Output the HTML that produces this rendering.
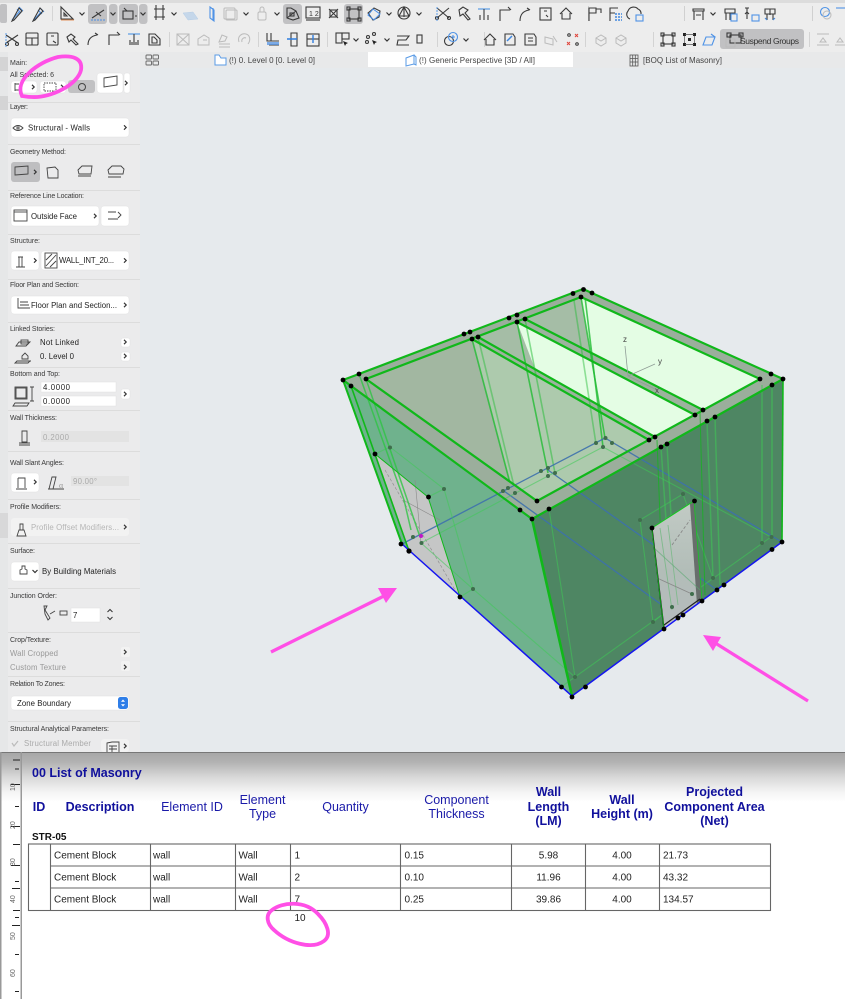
<!DOCTYPE html>
<html><head><meta charset="utf-8"><style>
html,body{margin:0;padding:0;background:#fff}
svg{display:block;font-family:"Liberation Sans",sans-serif;filter:blur(.35px)}
.l{font-size:7px;fill:#3a3a3a}
.v{font-size:7.8px;fill:#222}
.d{font-size:7.8px;fill:#aaa}
.t{font-size:8px;fill:#444}
.b{fill:#fff;stroke:#e0e0e0;stroke-width:.5}
.s{stroke:#dcdcdc;stroke-width:1}
.i path,.i rect,.i circle{fill:none;stroke:#3a3a3a;stroke-width:1.100}
.u path,.u rect,.u circle{fill:none;stroke:#4f93e6;stroke-width:1.100}
.g path,.g rect,.g circle{fill:none;stroke:#bbb;stroke-width:1}
.p path,.p rect{fill:none;stroke:#444;stroke-width:.9}
.h{font-size:12.5px;fill:#1a1aa8;text-anchor:middle}
.hb{font-size:12.5px;fill:#10109c;font-weight:bold;text-anchor:middle}
.c{font-size:10px;fill:#222}
.m{text-anchor:middle}
.rn{font-size:7px;fill:#666}
</style></head><body>
<svg width="845" height="999" viewBox="0 0 845 999" xmlns="http://www.w3.org/2000/svg">
<defs>
<path id="c" d="M-2.5-1 0 1.5 2.5-1" fill="none" stroke="#333" stroke-width="1.2"/>
<path id="r" d="M-1-2.2 1.2 0-1 2.2" fill="none" stroke="#333" stroke-width="1.2"/>
<linearGradient id="sh" x1="0" y1="0" x2="0" y2="1"><stop offset="0" stop-color="#a6a6a6"/><stop offset=".2" stop-color="#b2b2b2"/><stop offset=".5" stop-color="#d8d8d8"/><stop offset=".8" stop-color="#f4f4f4"/><stop offset="1" stop-color="#fff"/></linearGradient>
<linearGradient id="dg" x1="0" y1="0" x2="0" y2="1"><stop offset="0" stop-color="#c2cbc5"/><stop offset=".55" stop-color="#b2bdb8"/><stop offset="1" stop-color="#b6bbbd"/></linearGradient>
</defs>

<!-- page base -->
<rect width="845" height="752" fill="#e6eaed"/>
<rect width="845" height="52" fill="#ededed"/>
<rect width="845" height="3" fill="#dcdcdc"/>
<rect y="52" width="845" height="16" fill="#e8e9ea"/>
<rect x="368" y="52" width="205" height="15" fill="#fff"/>

<!-- toolbar row buttons -->
<g fill="#c1c1c3">
<rect x="0" y="4" width="7" height="19" rx="2"/>
<rect x="88" y="4" width="19" height="20" rx="3"/><rect x="109" y="4" width="8.500" height="20" rx="3"/>
<rect x="119" y="4" width="19" height="20" rx="3"/><rect x="139" y="4" width="8.500" height="20" rx="3"/>
<rect x="283" y="4" width="19" height="20" rx="3"/><rect x="344" y="4" width="19" height="20" rx="3"/>
<rect x="720" y="29" width="84" height="20" rx="3"/>
</g>

<!-- toolbar row 1 -->
<g class="u"><path d="M12 20 20 11M19 7l4 4M17 9l4 4"/><path d="M33 21 41 12M40 8l4 4M38 10l4 4"/></g>
<g class="i"><path d="M19 8l3 3-8 9-2 1 1-2zM40 8l3 3-8 9-2 1 1-2z"/></g>
<path d="M52.500 6v15" stroke="#d5d5d5"/>
<g class="i"><path d="M61 7v12h12zM64 13v3h3z"/></g><path d="M61 20h13" stroke="#e2915a" fill="none"/>
<g class="i"><path d="M92 18l12-8M96 12l5 4"/></g><path d="M91 20h14" stroke="#4a8ee6" stroke-dasharray="2 1" fill="none"/>
<g class="i"><rect x="123" y="11" width="10" height="8"/><path d="M124 8l3 3M135 16h2"/></g>
<g class="i"><path d="M154 9h11M154 17h11M156 5v15M163 5v15" stroke-width="1.400"/></g>
<g class="u"><path d="M210 7l4 3v11l-4-3z"/><path d="M213 8v12"/></g>
<path d="M183 13l10-1 5 7-10 1z" fill="#c5d7ea" stroke="#b5cde6" stroke-width=".5"/>
<g class="g"><rect x="224" y="8" width="11" height="11" rx="1"/><rect x="226" y="10" width="11" height="10" rx="1"/></g>
<g class="g"><rect x="258" y="12" width="8" height="8" rx="1.500"/><path d="M260 12V9a2 2 0 0 1 4 0v3"/></g>
<g class="i"><path d="M287 8h4l5 3 3 7-6 2-6-2zM287 18l9-7"/><rect x="290" y="13" width="4" height="3"/></g>
<g class="i"><rect x="306" y="7" width="14" height="11"/><path d="M306 20h14"/></g><text x="309" y="16" font-size="7" fill="#333">1 2</text>
<g class="i"><path d="M329 9l9 9M338 9l-9 9"/><rect x="330" y="10" width="7" height="7"/></g>
<g class="i"><rect x="349" y="9" width="10" height="10"/><rect x="347" y="7" width="3" height="3"/><rect x="358" y="7" width="3" height="3"/><rect x="347" y="18" width="3" height="3"/><rect x="358" y="18" width="3" height="3"/></g>
<g class="i"><path d="M368 13l6-5 6 3-1 6-6 3z"/></g><path d="M373 9l7 5-6 6-6-5z" fill="none" stroke="#4a8ee6"/>
<g class="i"><circle cx="404" cy="13" r="6"/><path d="M404 7l-5 9h10zM404 7v10"/></g>
<g class="i"><path d="M437 8l12 10M449 8l-12 10"/><circle cx="437" cy="18" r="1.500"/><circle cx="449" cy="18" r="1.500"/></g><path d="M437 7v14" stroke="#5a9be6" stroke-dasharray="2 1"/>
<g class="i"><path d="M459 10l4-3 5 3-3 3 5 6-2 1-5-6-3 2z"/></g>
<path d="M478 9h12" stroke="#5a9be6" stroke-width="1.200"/><g class="i"><path d="M484 9v11M480 20v-5M488 20v-5"/></g>
<g class="i"><path d="M500 21V10h10M508 7l3 3"/></g><g class="i"><path d="M520 21c0-6 3-10 9-11M527 8l3 2"/></g>
<g class="i"><rect x="540" y="8" width="11" height="12"/><path d="M544 11h3M546 15l2 2"/></g>
<g class="i"><path d="M560 14l6-6 6 6M562 13v6h8v-6" stroke-width="1.400"/></g>
<path d="M588.500 6v15M684.500 6v15M812.500 6v15" stroke="#d0d0d0"/>
<g class="i"><path d="M589 21V8h7v5h-7M596 9h5v4"/></g>
<g class="i"><path d="M610 21V8h8M610 13h5"/></g><path d="M615 14h7M615 17h7M615 20h7" stroke="#3f87e0" stroke-width="1.500" stroke-dasharray="2 1"/>
<g class="i"><path d="M630 19a5 5 0 0 1-2-8 6 6 0 0 1 10-2 5 5 0 0 1 3 5"/></g><g class="u"><rect x="636" y="15" width="7" height="6"/></g>
<g class="i"><path d="M693 9h11v2h-11zM694 11v9M703 11v9M696 15h5"/></g>
<g class="i"><path d="M725 9h10v4h-10zM726 13v7M730 13v7"/></g><g class="u"><rect x="731" y="14" width="6" height="7"/></g>
<g class="i"><path d="M745 8h4M747 8v11M745 14l2-2 2 2"/></g><g class="u"><rect x="752" y="15" width="7" height="6"/></g>
<g class="i"><path d="M765 9h10v5h-10zM767 14v6M773 14v6M770 9v6"/></g><path d="M767 20l-2-2M773 20l2-2" stroke="#3f87e0"/>
<g class="u"><circle cx="825" cy="12" r="4.500"/><path d="M836 8h9"/></g><g class="g"><circle cx="827" cy="15" r="4"/></g>
<use href="#c" x="82" y="13.500"/><use href="#c" x="113" y="13.500"/><use href="#c" x="143" y="13.500"/><use href="#c" x="174" y="13.500"/><use href="#c" x="246" y="13.500"/><use href="#c" x="277" y="13.500"/><use href="#c" x="389" y="13.500"/><use href="#c" x="419" y="13.500"/><use href="#c" x="713" y="13.500"/>

<!-- toolbar row 2 -->
<g class="i"><path d="M6 35l12 8M18 35 6 43"/><circle cx="7" cy="44" r="1.500"/><circle cx="17" cy="44" r="1.500"/></g>
<path d="M6 33v14" stroke="#5a9be6" stroke-dasharray="2 1"/>
<g class="i"><rect x="26" y="33" width="12" height="12" rx="1"/><path d="M26 38h12M32 38v7"/></g>
<g class="i"><rect x="47" y="33" width="11" height="12" rx="1"/><path d="M51 36h3M53 41l3 2"/></g>
<g class="i"><path d="M67 37l4-3 4 3-2 2 5 5-2 1-5-5-2 2z"/></g>
<g class="i"><path d="M88 45c0-6 3-9 9-10M95 33l3 2"/></g>
<g class="i"><path d="M109 45V35h10M117 32l3 3"/></g>
<path d="M128 34h12" stroke="#5a9be6" stroke-width="1.200"/><g class="i"><path d="M134 34v11M130 45v-5M138 45v-5M132 45v-3M136 45v-3"/></g>
<g class="i"><path d="M149 34h6l5 5v6h-11zM152 37h2l3 3v3h-5z"/></g>
<path d="M169.500 32v15M258.500 32v15M327.500 32v15M437.500 32v15M484.500 32v15M585.500 32v15M653.500 32v15M809.500 32v15" stroke="#d3d3d3"/>
<g class="g"><rect x="177" y="34" width="12" height="11"/><path d="M177 34l12 11M189 34l-12 11"/></g>
<g class="g"><path d="M198 45v-6l6-4 5 3v7zM203 40h4"/></g>
<g class="g"><path d="M219 42l3-7 5 2-2 4zM219 44h11M219 47h11"/></g>
<g class="g"><path d="M239 42c-2-6 3-9 7-8 4 1 5 6 2 10M242 42c-1-3 2-5 4-4"/></g>
<g class="i"><path d="M267 33v8h12M271 33v8M269 45h10"/></g><path d="M267 42h12v3h-12z" fill="#4a8ee6" opacity=".7"/>
<g class="i"><path d="M291 33h6v13h-6z"/></g><path d="M287 39h8M297 39h-3" stroke="#2f7ee0" stroke-width="1.500"/>
<g class="i"><rect x="307" y="34" width="12" height="12"/><path d="M307 39h12"/></g><path d="M313 35v8" stroke="#2f7ee0" stroke-width="1.400"/>
<g class="i"><rect x="336" y="33" width="6" height="10"/><rect x="342" y="33" width="7" height="6"/></g><path d="M343 41l2 5 1-2 2-1z" fill="#222"/>
<g class="i"><circle cx="368" cy="37" r="1.500"/><circle cx="374" cy="34" r="1.500"/><circle cx="367" cy="42" r="1.500"/></g><path d="M372 40l2 5 1-2 2-1z" fill="#222"/>
<g class="i"><path d="M397 36h12l-3 4h-8l-1 5h12"/></g>
<g class="i"><rect x="417" y="35" width="5" height="8"/></g>
<g class="i"><circle cx="449" cy="41" r="4.500"/></g><g class="u"><circle cx="453" cy="37" r="4.500"/><path d="M451 37h4M453 35v4"/></g>
<g class="i"><path d="M484 40l6-6 6 6M486 39v6h8v-6" stroke-width="1.400"/></g>
<g class="i"><path d="M505 34h8l2 3v8h-10z"/></g><path d="M507 41l5-5" stroke="#3f87e0" stroke-width="1.500"/>
<g class="i"><path d="M525 34h9l2 3v8h-11zM528 38h5M528 41h5"/></g>
<g class="g"><path d="M545 37l8 2v6l-8-2z"/><path d="M553 36l4 6"/></g>
<g fill="none" stroke="#333"><circle cx="569" cy="35" r="1.300"/><circle cx="577" cy="44" r="1.300"/></g>
<g fill="none" stroke="#e0443a"><path d="M567 42l3 3M570 42l-3 3M575 34l3 3M578 34l-3 3"/></g>
<g class="g"><path d="M596 38l5-3 5 3v5l-5 3-5-3zM596 38l5 3 5-3" stroke="#bcd0e4"/><path d="M616 38l5-3 5 3v5l-5 3-5-3zM616 38l5 3 5-3" stroke="#bcd0e4"/></g>
<g class="i"><rect x="663" y="35" width="10" height="9"/><rect x="661" y="33" width="3" height="3"/><rect x="672" y="33" width="3" height="3"/><rect x="661" y="43" width="3" height="3"/><rect x="672" y="43" width="3" height="3"/></g>
<g fill="#222"><rect x="683" y="33" width="3" height="3"/><rect x="693" y="33" width="3" height="3"/><rect x="683" y="43" width="3" height="3"/><rect x="693" y="43" width="3" height="3"/><rect x="688" y="38" width="3" height="3"/></g><path d="M685 34.500h9M685 44.500h9M684.500 36v7M694.500 36v7" stroke="#555" fill="none" stroke-width=".7"/>
<g class="u"><path d="M703 45l3-8h9l-3 8zM711 34l4 3" stroke-width="1.300"/></g>
<g class="i"><rect x="730" y="35" width="11" height="8"/><rect x="727" y="33" width="4" height="4"/><rect x="739" y="33" width="4" height="4"/></g>
<g class="g"><rect x="726" y="39" width="9" height="8" stroke="#999"/></g>
<text x="740" y="44" font-size="8.500" fill="#333" textLength="59">Suspend Groups</text>
<g class="g"><path d="M817 34h12M820 42l3-4 3 4zM817 45h12"/><path d="M837 42l3-4 3 4zM835 45h10"/></g>
<use href="#c" x="356" y="39.500"/><use href="#c" x="387" y="39.500"/><use href="#c" x="466" y="39.500"/>

<!-- tab row -->
<g fill="none" stroke="#666" stroke-width=".9"><rect x="146" y="55" width="5.500" height="4" rx=".8"/><rect x="153" y="55" width="5.500" height="4" rx=".8"/><rect x="146" y="61" width="5.500" height="4" rx=".8"/><rect x="153" y="61" width="5.500" height="4" rx=".8"/></g>
<path d="M215 65V55h4l2 3h5v7z" fill="#fff" stroke="#5a9be6"/>
<text x="229" y="63" class="t" textLength="86">(!) 0. Level 0 [0. Level 0]</text>
<path d="M406 58l8-3v9l-8 2zM414 55l2 2v8l-2-1" fill="#fff" stroke="#5a9be6"/>
<text x="419" y="63" class="t" textLength="116">(!) Generic Perspective [3D / All]</text>
<g fill="none" stroke="#555" stroke-width=".8"><rect x="630" y="55" width="8" height="11"/><path d="M630 58.500h8M630 62h8M632.700 55v11M635.300 55v11"/></g>
<text x="643" y="63" class="t" textLength="79">[BOQ List of Masonry]</text>

<!-- left panel -->
<rect x="0" y="52" width="8" height="700" fill="#e6e7e8"/>
<rect x="8" y="52" width="132" height="700" fill="#ebebec"/>
<rect x="0" y="57" width="8" height="14" fill="#d4d4d5"/><rect x="0" y="96" width="8" height="14" fill="#d4d4d5"/><rect x="0" y="513" width="8" height="25" fill="#d8d8d9"/>
<path d="M8 102.500h132M8 144.500h132M8 190.500h132M8 234.500h132M8 279.500h132M8 322.500h132M8 367.500h132M8 410.500h132M8 451.500h132M8 499.500h132M8 543.500h132M8 588.500h132M8 632.500h132M8 676.500h132M8 721.500h132" class="s"/>

<g class="l">
<text x="10" y="65">Main:</text><text x="10" y="77" textLength="44">All Selected: 6</text>
<text x="10" y="109" textLength="18">Layer:</text>
<text x="10" y="154" textLength="56">Geometry Method:</text>
<text x="10" y="198" textLength="74">Reference Line Location:</text>
<text x="10" y="243" textLength="30">Structure:</text>
<text x="10" y="287" textLength="69">Floor Plan and Section:</text>
<text x="10" y="331" textLength="45">Linked Stories:</text>
<text x="10" y="376" textLength="50">Bottom and Top:</text>
<text x="10" y="420" textLength="47">Wall Thickness:</text>
<text x="10" y="465" textLength="54">Wall Slant Angles:</text>
<text x="10" y="509" textLength="51">Profile Modifiers:</text>
<text x="10" y="553" textLength="25">Surface:</text>
<text x="10" y="598" textLength="47">Junction Order:</text>
<text x="10" y="642" textLength="41">Crop/Texture:</text>
<text x="10" y="686" textLength="55">Relation To Zones:</text>
<text x="10" y="731" textLength="99">Structural Analytical Parameters:</text>
</g>

<!-- panel buttons -->
<g class="b">
<rect x="11" y="81" width="26" height="12" rx="3"/><rect x="40" y="81" width="26" height="12" rx="3"/>
<rect x="97" y="73" width="26" height="20" rx="3"/><rect x="124" y="73" width="6" height="20" rx="2"/>
<rect x="11" y="118" width="118" height="19" rx="3"/>
<rect x="11" y="206" width="88" height="20" rx="3"/><rect x="101" y="206" width="28" height="20" rx="3"/>
<rect x="11" y="251" width="28" height="19" rx="3"/><rect x="41" y="251" width="88" height="19" rx="3"/>
<rect x="11" y="296" width="118" height="18" rx="3"/>
<rect x="121" y="338" width="9" height="9" rx="2"/><rect x="121" y="352" width="9" height="9" rx="2"/>
<rect x="41" y="382" width="75" height="10"/><rect x="41" y="396" width="75" height="10"/>
<rect x="121" y="389" width="9" height="10" rx="2"/>
<rect x="11" y="473" width="28" height="19" rx="3"/>
<rect x="11" y="562" width="28" height="19" rx="3"/>
<rect x="71" y="608" width="29" height="14"/>
<rect x="11" y="696" width="118" height="14" rx="3"/>
</g>
<rect x="68" y="80" width="27" height="13" rx="3" fill="#c1c1c3"/>
<rect x="11" y="162" width="29" height="20" rx="3" fill="#bebec0"/>
<g fill="#f2f2f2"><rect x="11" y="518" width="118" height="18" rx="3"/><rect x="121" y="647" width="9" height="10" rx="2"/><rect x="121" y="661" width="9" height="10" rx="2"/><rect x="101" y="739" width="28" height="13" rx="3"/></g>
<g fill="#e3e3e3"><rect x="41" y="431" width="88" height="11"/><rect x="71" y="476" width="58" height="10"/></g>
<rect x="118" y="697" width="10" height="12" rx="2.500" fill="#2f7ee8"/>
<path d="M123 699.500l-2 2.200h4zM123 706.500l-2-2.200h4z" fill="#fff"/>

<g class="p">
<path d="M15 83v8M15 84h4M15 90h4"/><rect x="44" y="83" width="12" height="8" stroke-dasharray="1.500 1"/>
<circle cx="82" cy="87" r="3.500" fill="none" stroke="#444"/>
<path d="M104 78l13-2v9l-13 2z"/>
<path d="M13 128q5-5 10 0q-5 5-10 0z"/><rect x="17" y="127" width="2" height="2"/>
<path d="M15 167l13-1v8l-13 1zM15 175l13-1" stroke="#333"/>
<path d="M47 168l8-1 3 3v8h-10z" stroke="#aaa"/>
<path d="M78 170l4-4h10l-1 8h-12zM78 176h13" stroke="#444"/>
<path d="M108 170l4-4h9l3 3-1 5h-14zM108 177h13" stroke="#666"/>
<rect x="14" y="210" width="13" height="11"/><path d="M14 212h13"/>
<path d="M108 212h8M108 219h10M118 212l3 3-3 3"/>
<path d="M18 257h5M19 257v10M22 257v10M16 267h9"/>
<rect x="45" y="253" width="12" height="15" fill="#9fd4ea"/><path d="M46 266l10-11M46 260l6-6M50 267l6-6"/>
<path d="M18 298v10h12M20 302h8M20 305h9"/>
<path d="M19 342h11l-4 4h-10z" fill="#999"/><rect x="21" y="340" width="7" height="4"/>
<path d="M22 356l3-3 3 3v3h-6zM17 361h14"/><path d="M17 361h13l-2 2h-13z" fill="#999"/>
<rect x="15" y="387" width="12" height="12"/><rect x="16" y="388" width="10" height="10"/><path d="M32 387v14M30 387h4M30 401h4"/><path d="M15 403h14l-2 3h-14z" fill="#888"/>
<g stroke="#999"><path d="M22 431h5v11h-5zM19 443h11M19 445h11"/></g>
<path d="M18 478h7v10M18 478v10M16 489h11"/>
<path d="M49 489l3-12h4l-3 12zM48 489h16" stroke="#aaa"/>
<path d="M19 530h5l2 6h-9zM20 524h3v6h-3z" stroke="#aaa"/>
<path d="M20 574h7v-4l-2-1v-3h-3v3l-2 1z"/>
<path d="M45 610l5 8-2 2-3-6-1-8h3zM50 614l5-3" stroke="#444"/><rect x="60" y="611" width="7" height="4"/>
<path d="M107 743l5-1h7v11h-12zM109 746h8M109 749h8M112 746v6" stroke="#999"/>
</g>
<text x="28" y="130.500" class="v" textLength="62">Structural - Walls</text>
<text x="31" y="219" class="v" textLength="46">Outside Face</text>
<text x="59" y="263" class="v" textLength="55">WALL_INT_20...</text>
<text x="31" y="308" class="v" textLength="86">Floor Plan and Section...</text>
<text x="40" y="345" class="v" textLength="39">Not Linked</text>
<text x="40" y="359" class="v" textLength="34">0. Level 0</text>
<text x="43" y="390" class="v" textLength="27">4.0000</text>
<text x="43" y="404" class="v" textLength="27">0.0000</text>
<text x="43" y="440" class="d" textLength="26">0.2000</text>
<text x="73" y="484" class="d" textLength="24">90.00°</text>
<text x="31" y="530" class="d" style="fill:#b5b5b5" textLength="88">Profile Offset Modifiers...</text>
<text x="42" y="574" class="v" textLength="74">By Building Materials</text>
<text x="73" y="618" class="v">7</text>
<text x="10" y="656" class="d" style="fill:#999" textLength="48">Wall Cropped</text>
<text x="10" y="670" class="d" style="fill:#999" textLength="56">Custom Texture</text>
<text x="17" y="706" class="v" textLength="54">Zone Boundary</text>
<text x="24" y="746" class="d" style="fill:#aaa" textLength="67">Structural Member</text>
<path d="M12 743l2 3 4-5" fill="none" stroke="#bbb" stroke-width="1.200"/>
<text x="59" y="488" font-size="8" fill="#999" font-family="Liberation Serif">α</text>
<g>
<use href="#r" x="33" y="87"/><use href="#r" x="62" y="87"/><use href="#r" x="126" y="83"/><use href="#r" x="125" y="127.500"/>
<use href="#r" x="35" y="172"/><use href="#r" x="95" y="216"/><use href="#r" x="35" y="260.500"/><use href="#r" x="125" y="260.500"/><use href="#r" x="125" y="305"/>
<use href="#r" x="125" y="342"/><use href="#r" x="125" y="356"/><use href="#r" x="125" y="394"/><use href="#r" x="35" y="482"/>
<use href="#r" x="125" y="527"/><use href="#r" x="125" y="652"/><use href="#r" x="125" y="667"/><use href="#r" x="125" y="746"/>
<use href="#c" x="35" y="571"/>
</g>
<path d="M107.500 612l2.500-2.500 2.500 2.500M107.500 617l2.500 2.500 2.500-2.500" fill="none" stroke="#333"/>

<!-- 3D model -->
<g>
<polygon points="366,379 581,297 760,379 537,501" fill="#adcaad"/>
<polygon points="366,379 472,339 510,482" fill="#a2b7a1"/>
<polygon points="581,297 760,379 703,410 525,319" fill="#e4fde4"/>
<polygon points="525,319 581,297 590,351" fill="#a5bda6"/>
<polygon points="517,322 695,415 655,437 478,337" fill="#e4fde4"/>
<polygon points="517,322 478,337 535,369" fill="#a5bda6"/>
<polygon points="525,319 703,410 695,415 517,322" fill="#9db29e"/>
<polygon points="478,337 655,437 649,440 472,339" fill="#9db29e"/>

<!-- interior sloped lines -->
<g fill="none" stroke="#22bb33" stroke-opacity=".8" stroke-width="1.600">
<path d="M472 339 510 483"/><path d="M478 337 515 490" stroke-opacity=".45"/>
<path d="M517 322 548 473"/><path d="M525 319 555 473" stroke-opacity=".5"/>
<path d="M581 297 605 438"/><path d="M573 294 596 444" stroke-opacity=".45"/><path d="M585 297 603 447"/>
</g>

<!-- right wall -->
<polygon points="532,519 783,379 782,542 572,696" fill="#4e8663"/>
<!-- left wall -->
<polygon points="343,380 532,519 572,696 460,596 428,497 375,454 409,551 402,544" fill="#6fb28d"/>
<polygon points="375,454 428,497 460,596 409,551" fill="#c5c6c6"/>
<g fill="none" stroke="#8a8a8a" stroke-width=".6"><path d="M385 470 455 590" stroke-dasharray="3 2"/><path d="M415 480 421 543"/><path d="M403 500 440 520"/></g>

<!-- rim -->
<path fill-rule="evenodd" d="M343 380 583 289 783 379 532 519zM366 379 581 297 760 379 537 501z" fill="#9bae9c"/>

<!-- blue base lines through -->
<g fill="none" stroke="#3d70ad" stroke-opacity=".9" stroke-width="1.300">
<path d="M402 544 605 438 782 542"/><path d="M548 470 717 590"/><path d="M504 491 680 618"/>
</g>
<!-- faint inner green -->
<g fill="none" stroke="#3ecb55" stroke-opacity=".55" stroke-width="1.100">
<path d="M421 543 603 447 771 537 575 677 473 589 421 543"/>
<path d="M390 447 444 489 473 589"/><path d="M375 454 390 447"/><path d="M428 497 444 489"/><path d="M460 597 473 589"/>
<path d="M653 622 672 607"/><path d="M640 520 683 494 713 578"/><path d="M640 520 653 622"/>
<path d="M549 509 575 677"/><path d="M561 687 575 677"/>
<path d="M661 447 672 607" stroke-width="1.500"/><path d="M667 444 676 605" stroke-width="1.500"/>
<path d="M707 421 713 578" stroke-width="1.500"/><path d="M715 417 720 585" stroke-width="1.500"/>
<path d="M762 385 762 543" stroke-width="1.500"/><path d="M772 385 772 537" stroke-width="1.500"/>
</g>
<g fill="none" stroke="#2ec444" stroke-opacity=".8" stroke-width="1.500">
<path d="M359 374 404 500 411 530"/><path d="M366 379 420 537"/>
</g>

<!-- main edges -->
<g fill="none" stroke="#10b81a" stroke-width="2.200" stroke-linejoin="round">
<path d="M343 380 583 289 783 379 532 519 343 380z"/>
<path d="M366 379 581 297 760 379 537 501 366 379z"/>
<path d="M525 319 703 410M517 322 695 415M478 337 655 437M472 339 649 440"/>
</g>
<g fill="none" stroke="#10b81a">
<path d="M343 380 402 544" stroke-width="2"/><path d="M351 386 409 551" stroke-width="1.600"/>
<path d="M532 519 572 696" stroke-width="2.600"/>
<path d="M783 379 782 542" stroke-width="1.600"/>
<path d="M375 454 428 497 460 597" stroke-width="1"/><path d="M375 454 409 551" stroke-width="1"/>
<path d="M657 440 664 620" stroke-width="1" stroke-opacity=".7"/><path d="M700 412 705 595" stroke-width="1" stroke-opacity=".7"/>
</g>

<!-- door -->
<polygon points="652,528 694,501 702,601 664,629" fill="url(#dg)"/>
<polygon points="690,504 694,501 702,601 697,605" fill="#686e6c"/>
<g fill="none" stroke-width=".9"><path d="M660 528 672 610" stroke="#7fb98c"/><path d="M668 525 678 605" stroke="#7fb98c"/><path d="M654 548 700 590" stroke="#58a870" stroke-opacity=".6"/><path d="M672 545 690 520" stroke="#888" stroke-dasharray="3 2"/><path d="M657 578 692 594" stroke="#888"/></g>
<path d="M652 528 664 629" stroke="#111" stroke-width="1.300" fill="none"/>
<path d="M664 625 700 599" stroke="#222" stroke-width="1.200" fill="none"/>
<path d="M665 627 702 601" stroke="#fff" stroke-width="1" fill="none"/>
<path d="M652 528 694 501" stroke="#12cc1c" stroke-width="1" fill="none"/>
<path d="M652 530 664 629M694 501 702 601" stroke="#12cc1c" stroke-width=".7" fill="none"/>

<!-- floor edge -->
<path d="M402 544 572 696 782 542" fill="none" stroke="#1515f0" stroke-width="1.500"/>

<!-- dim dots -->
<g fill="#3f6e4c">
<circle cx="390" cy="447.500" r="2"/><circle cx="444" cy="489" r="2"/><circle cx="421.500" cy="543" r="2"/><circle cx="473" cy="589" r="2"/><circle cx="575" cy="677" r="2"/><circle cx="653" cy="622" r="2"/><circle cx="713" cy="578" r="2"/><circle cx="762" cy="543" r="2"/><circle cx="771.500" cy="537" r="2"/><circle cx="640" cy="520" r="2"/><circle cx="683" cy="494" r="2"/><circle cx="672" cy="607" r="2"/><circle cx="692" cy="594" r="2"/><circle cx="605.500" cy="438" r="2"/><circle cx="603" cy="447" r="2"/><circle cx="596" cy="443" r="2"/><circle cx="612" cy="443" r="2"/><circle cx="503" cy="491" r="2"/><circle cx="515" cy="493" r="2"/><circle cx="508" cy="488" r="2"/><circle cx="541" cy="471" r="2"/><circle cx="555" cy="473" r="2"/><circle cx="548" cy="468" r="2"/><circle cx="548" cy="476" r="2"/><circle cx="413" cy="537" r="2"/>
</g>
<!-- black dots -->
<g fill="#000">
<circle cx="343" cy="380" r="2.400"/><circle cx="359" cy="374" r="2.400"/><circle cx="366" cy="379" r="2.400"/><circle cx="351" cy="386" r="2.400"/><circle cx="464" cy="334" r="2.400"/><circle cx="470" cy="332" r="2.400"/><circle cx="472" cy="339" r="2.400"/><circle cx="478" cy="337" r="2.400"/><circle cx="509" cy="318" r="2.400"/><circle cx="517" cy="315" r="2.400"/><circle cx="517" cy="322" r="2.400"/><circle cx="525" cy="319" r="2.400"/><circle cx="573" cy="293.500" r="2.400"/><circle cx="583.500" cy="289.500" r="2.400"/><circle cx="592" cy="293" r="2.400"/><circle cx="581" cy="297" r="2.400"/><circle cx="760" cy="379" r="2.400"/><circle cx="771" cy="374" r="2.400"/><circle cx="783" cy="379" r="2.400"/><circle cx="772" cy="385" r="2.400"/><circle cx="695" cy="415" r="2.400"/><circle cx="703" cy="410" r="2.400"/><circle cx="707" cy="421" r="2.400"/><circle cx="715" cy="417" r="2.400"/><circle cx="649" cy="440" r="2.400"/><circle cx="655" cy="437" r="2.400"/><circle cx="661" cy="447" r="2.400"/><circle cx="667" cy="444" r="2.400"/><circle cx="520" cy="510" r="2.400"/><circle cx="537" cy="501" r="2.400"/><circle cx="549" cy="509" r="2.400"/><circle cx="532" cy="519" r="2.400"/><circle cx="375" cy="454" r="2.400"/><circle cx="428.500" cy="497" r="2.400"/><circle cx="401" cy="544" r="2.400"/><circle cx="409" cy="551" r="2.600"/><circle cx="460" cy="597" r="2.400"/><circle cx="561.500" cy="687" r="2.400"/><circle cx="572" cy="697" r="2.400"/><circle cx="585.500" cy="687" r="2.400"/><circle cx="652" cy="528" r="2.400"/><circle cx="694.500" cy="501" r="2.400"/><circle cx="702" cy="601" r="2.400"/><circle cx="664" cy="629" r="2.400"/><circle cx="678" cy="618" r="2.400"/><circle cx="683" cy="615" r="2.400"/><circle cx="717" cy="590" r="2.400"/><circle cx="724" cy="585" r="2.400"/><circle cx="772" cy="549.500" r="2.400"/><circle cx="782" cy="542" r="2.400"/>
</g>
<circle cx="421" cy="536" r="2" fill="#c018c8"/>
<!-- axes -->
<g fill="none" stroke="#8f9c96" stroke-width=".8"><path d="M628 376 625 346M628 376 655 364M628 376 657 390"/></g>
<g font-size="8" fill="#444"><text x="623" y="342">z</text><text x="658" y="364">y</text><text x="655" y="393">x</text></g>
</g>

<!-- schedule -->
<rect x="0" y="752" width="845" height="247" fill="#fff"/>
<rect x="0" y="752" width="845" height="50" fill="url(#sh)"/>
<rect x="0" y="752" width="845" height="1" fill="#777"/>
<rect x="0" y="752" width="1.500" height="247" fill="#999"/>
<rect x="20.500" y="752" width="1.500" height="247" fill="#999"/>
<g stroke="#222" stroke-width="1" fill="none">
<path d="M13 760h7M15 769h4M11 784.500h9M15 806.500h4M11 826.500h9M13 844.500h7M11 865.500h9M15 881.500h4M12 888.500h8M13 910.500h7M15 917.500h4M12 925.500h8M15 954.500h4M15 991.500h4"/>
</g>
<g class="rn">
<text transform="translate(15 791) rotate(-90)">10</text>
<text transform="translate(15 829) rotate(-90)">20</text>
<text transform="translate(15 866) rotate(-90)">30</text>
<text transform="translate(15 903) rotate(-90)">40</text>
<text transform="translate(15 940) rotate(-90)">50</text>
<text transform="translate(15 977) rotate(-90)">60</text>
</g>

<text x="32" y="777" font-size="12.500" font-weight="bold" fill="#10109c">00 List of Masonry</text>
<text x="39" y="811" class="hb">ID</text>
<text x="100" y="811" class="hb">Description</text>
<text x="192" y="811" class="h">Element ID</text>
<text x="262.500" y="804" class="h">Element</text><text x="262.500" y="818" class="h">Type</text>
<text x="345.500" y="811" class="h">Quantity</text>
<text x="456.500" y="804" class="h">Component</text><text x="456.500" y="818" class="h">Thickness</text>
<text x="548.500" y="796" class="hb">Wall</text><text x="548.500" y="811" class="hb">Length</text><text x="548.500" y="825" class="hb">(LM)</text>
<text x="622" y="804" class="hb">Wall</text><text x="622" y="818" class="hb">Height (m)</text>
<text x="714.500" y="796" class="hb">Projected</text><text x="714.500" y="811" class="hb">Component Area</text><text x="714.500" y="825" class="hb">(Net)</text>
<text x="32" y="840" font-size="10" font-weight="bold" fill="#111">STR-05</text>

<g fill="none" stroke="#666" stroke-width="1.100">
<rect x="28.500" y="844" width="742" height="66.500"/>
<path d="M50.500 844v66.500M150.500 844v66.500M235.500 844v66.500M290.500 844v66.500M400.500 844v66.500M511.500 844v66.500M585.500 844v66.500M659.500 844v66.500M50.500 866h720M50.500 888h720"/>
</g>
<g class="c">
<text x="54" y="858.500">Cement Block</text><text x="153" y="858.500">wall</text><text x="238.500" y="858.500">Wall</text><text x="294.500" y="858.500">1</text><text x="404.500" y="858.500">0.15</text><text x="548.500" y="858.500" class="m">5.98</text><text x="622" y="858.500" class="m">4.00</text><text x="663" y="858.500">21.73</text>
<text x="54" y="880.500">Cement Block</text><text x="153" y="880.500">wall</text><text x="238.500" y="880.500">Wall</text><text x="294.500" y="880.500">2</text><text x="404.500" y="880.500">0.10</text><text x="548.500" y="880.500" class="m">11.96</text><text x="622" y="880.500" class="m">4.00</text><text x="663" y="880.500">43.32</text>
<text x="54" y="902.500">Cement Block</text><text x="153" y="902.500">wall</text><text x="238.500" y="902.500">Wall</text><text x="294.500" y="902.500">7</text><text x="404.500" y="902.500">0.25</text><text x="548.500" y="902.500" class="m">39.86</text><text x="622" y="902.500" class="m">4.00</text><text x="663" y="902.500">134.57</text>
<text x="294.500" y="921">10</text>
</g>

<!-- pink annotations -->
<g fill="none" stroke="#ff4fe6" stroke-width="3.800">
<path d="M22 96C14 80 38 62 58 57 72 55 83 58 81 70 78 84 52 98 32 97 27 97 24 96 22 96z"/>
<path d="M272 910C282 902 305 900 318 914 327 923 332 935 324 941 312 950 288 943 274 930 267 924 265 915 272 910z"/>
</g>
<g fill="none" stroke="#ff4fe6" stroke-width="3.300">
<path d="M271 652 388 594"/>
<path d="M808 701 712 641"/>
</g>
<polygon points="378,588 397,588 386,603" fill="#ff4fe6"/>
<polygon points="703,635 721,637 713,651" fill="#ff4fe6"/>
</svg>
</body></html>
